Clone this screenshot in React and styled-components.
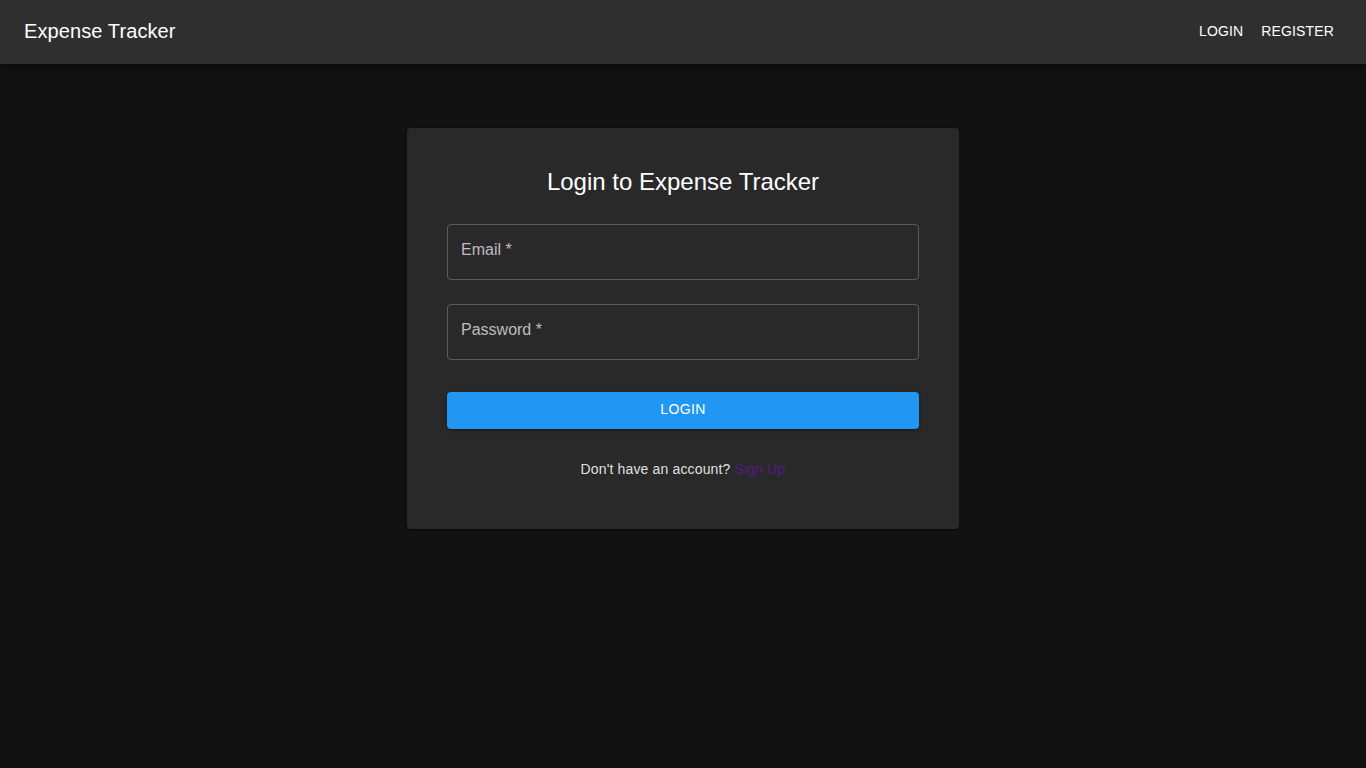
import React, { useState } from "react";
import styled, { createGlobalStyle } from "styled-components";

const GlobalStyle = createGlobalStyle`
  html, body {
    margin: 0;
    padding: 0;
    background: #121212;
    color: #ffffff;
    font-family: "Liberation Sans", Arial, sans-serif;
  }
  * {
    box-sizing: border-box;
  }
`;

export default function App() {
  const [form, setForm] = useState({ email: "", password: "" });

  function handleChange(event) {
    const { name, value } = event.target;
    setForm({ ...form, [name]: value });
  }

  function handleSubmit(event) {
    event.preventDefault();
  }

  return (
    <>
      <GlobalStyle />
      <AppBar>
        <Brand>Expense Tracker</Brand>
        <Nav>
          <NavButton>Login</NavButton>
          <NavButton>Register</NavButton>
        </Nav>
      </AppBar>
      <Main>
        <Card onSubmit={handleSubmit}>
          <Title>Login to Expense Tracker</Title>
          <Field>
            <Input
              name="email"
              type="email"
              placeholder="Email *"
              value={form.email}
              onChange={handleChange}
            />
          </Field>
          <Field>
            <Input
              name="password"
              type="password"
              placeholder="Password *"
              value={form.password}
              onChange={handleChange}
            />
          </Field>
          <SubmitButton type="submit">Login</SubmitButton>
          <Footer>
            Don't have an account? <SignUpLink href="#register">Sign Up</SignUpLink>
          </Footer>
        </Card>
      </Main>
    </>
  );
}

const AppBar = styled.header`
  display: flex;
  align-items: center;
  justify-content: space-between;
  height: 64px;
  padding: 0 24px 2px;
  background: #2f2f2f;
  box-shadow: 0 2px 4px -1px rgba(0, 0, 0, 0.2), 0 4px 5px 0 rgba(0, 0, 0, 0.14),
    0 1px 10px 0 rgba(0, 0, 0, 0.12);
  position: relative;
  z-index: 1;
`;

const Brand = styled.div`
  font-size: 20px;
  letter-spacing: 0.005em;
  line-height: 1.6;
  color: #ffffff;
`;

const Nav = styled.nav`
  display: flex;
  gap: 2px;
`;

const NavButton = styled.button`
  background: none;
  border: none;
  color: #ffffff;
  font-family: inherit;
  font-size: 14px;
  letter-spacing: 0.01em;
  text-transform: uppercase;
  line-height: 1.75;
  padding: 6px 8px;
  border-radius: 4px;
  cursor: pointer;
`;

const Main = styled.main`
  display: flex;
  justify-content: center;
  padding: 64px 24px;
`;

const Card = styled.form`
  width: 552px;
  padding: 38px 40px 42px;
  background: #292929;
  border-radius: 4px;
  box-shadow: 0 2px 1px -1px rgba(0, 0, 0, 0.2), 0 1px 1px 0 rgba(0, 0, 0, 0.14),
    0 1px 3px 0 rgba(0, 0, 0, 0.12);
  display: flex;
  flex-direction: column;
`;

const Title = styled.h1`
  margin: 0 0 10px;
  font-size: 24px;
  font-weight: 400;
  line-height: 1.334;
  text-align: center;
  color: #ffffff;
`;

const Field = styled.div`
  margin: 16px 0 8px;
`;

const Input = styled.input`
  width: 100%;
  height: 56px;
  padding: 0 13px 5px;
  background: transparent;
  border: 1px solid rgba(255, 255, 255, 0.23);
  border-radius: 4px;
  color: #ffffff;
  font-family: inherit;
  font-size: 16px;
  outline: none;

  &::placeholder {
    color: rgba(255, 255, 255, 0.7);
  }
`;

const SubmitButton = styled.button`
  margin: 24px 0 16px;
  height: 36.5px;
  padding: 0 0 3px;
  background: #2196f3;
  border: none;
  border-radius: 4px;
  color: #ffffff;
  font-family: inherit;
  font-size: 14px;
  letter-spacing: 0.02857em;
  text-transform: uppercase;
  cursor: pointer;
  box-shadow: 0 3px 1px -2px rgba(0, 0, 0, 0.2), 0 2px 2px 0 rgba(0, 0, 0, 0.14),
    0 1px 5px 0 rgba(0, 0, 0, 0.12);
`;

const Footer = styled.p`
  margin: 14px 0 8px;
  font-size: 14px;
  line-height: 1.43;
  letter-spacing: 0.01071em;
  text-align: center;
  color: rgba(255, 255, 255, 0.87);
`;

const SignUpLink = styled.a`
  color: #551a8b;
  text-decoration: none;
`;
